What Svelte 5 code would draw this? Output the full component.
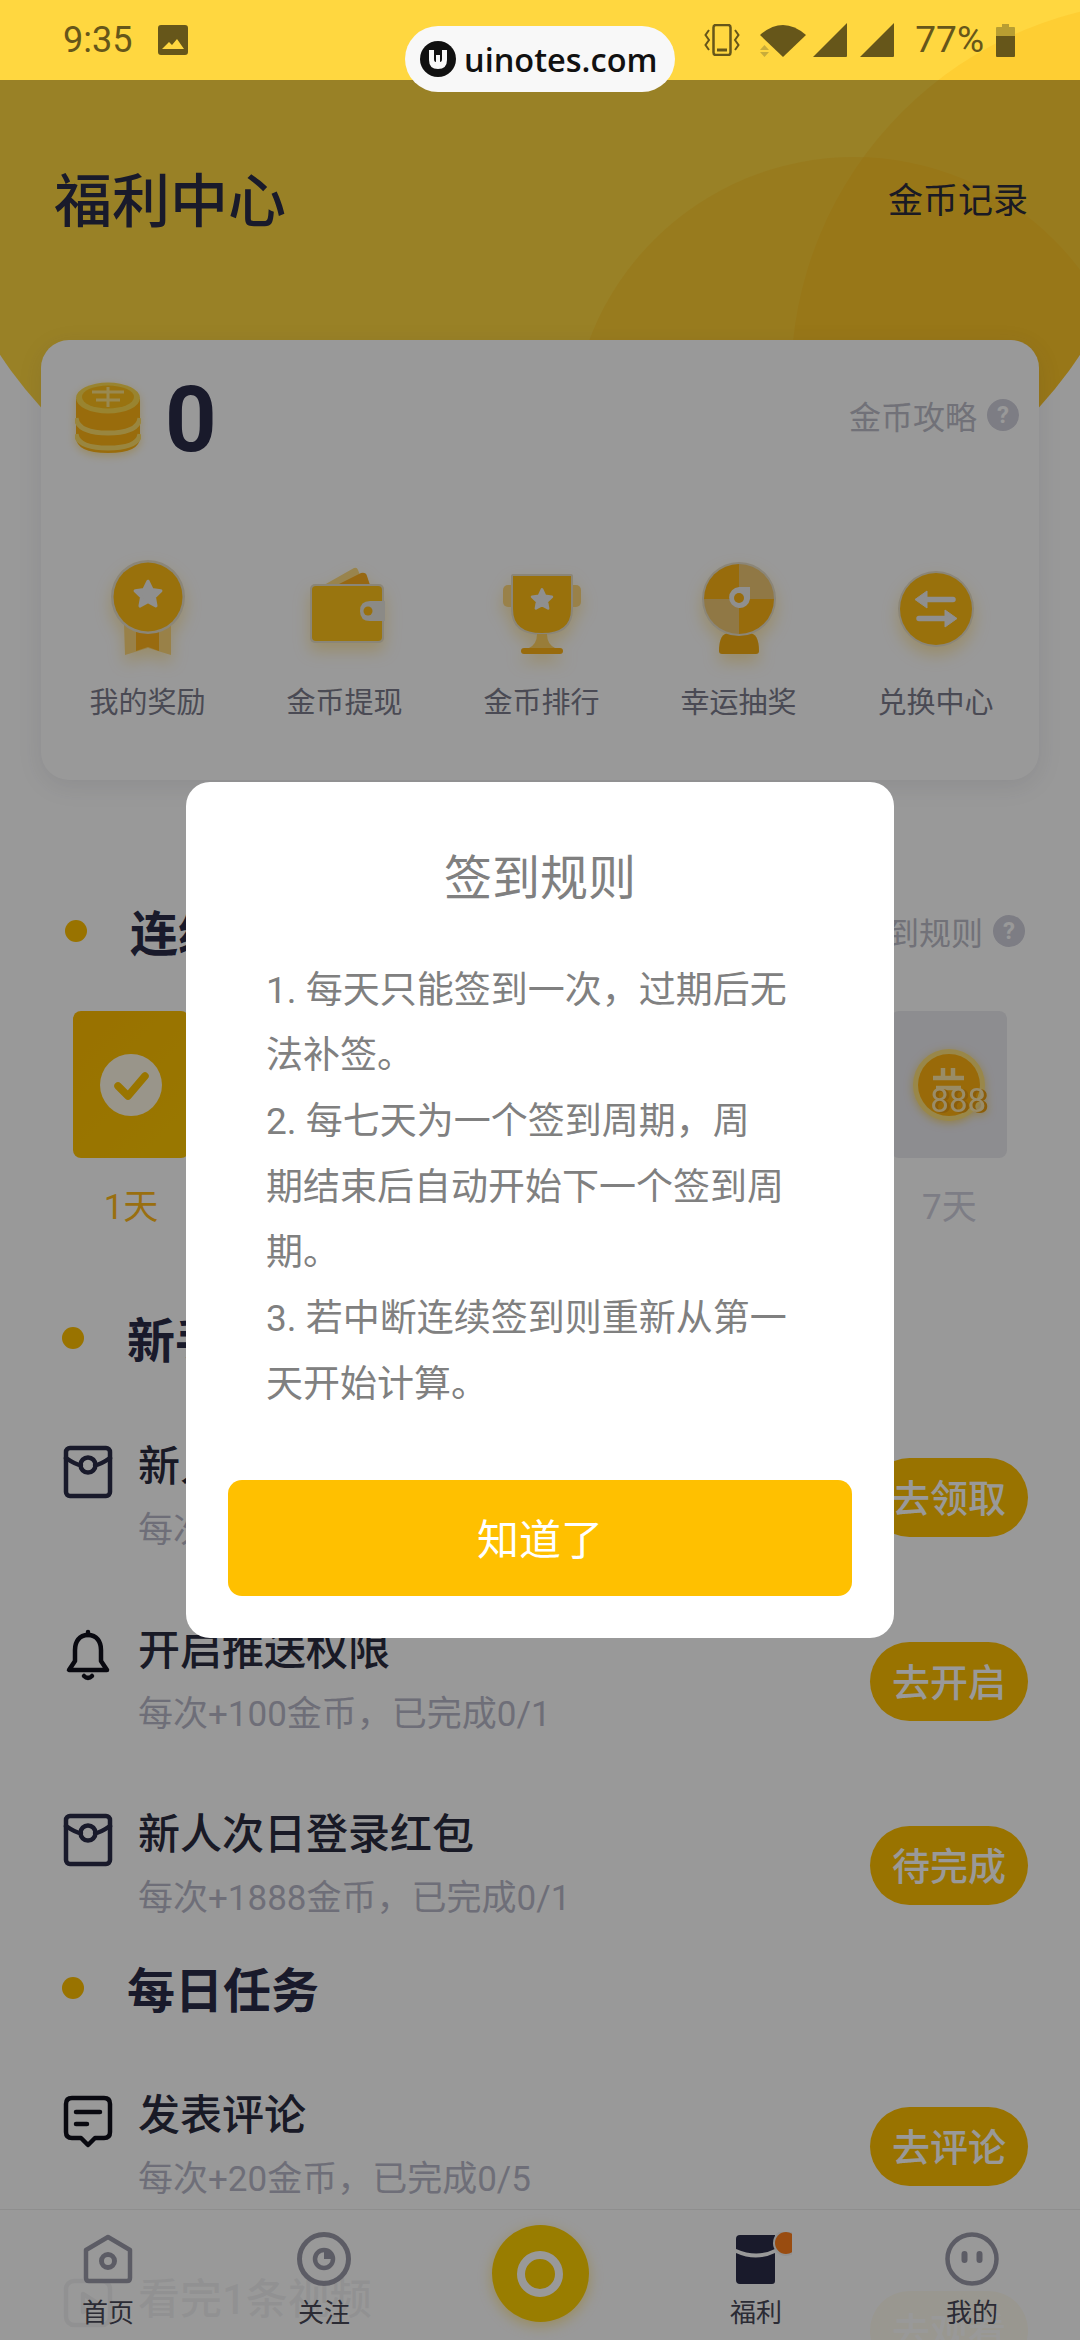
<script>
	const features = [
		{ label: '我的奖励', icon: 'medal' },
		{ label: '金币提现', icon: 'wallet' },
		{ label: '金币排行', icon: 'trophy' },
		{ label: '幸运抽奖', icon: 'wheel' },
		{ label: '兑换中心', icon: 'swap' }
	];

	const days = [
		{ label: '1天', done: true },
		{ label: '2天', value: 100 },
		{ label: '3天', value: 200 },
		{ label: '4天', value: 300 },
		{ label: '5天', value: 400 },
		{ label: '6天', value: 500 },
		{ label: '7天', value: 888 }
	];

	const newbieTasks = [
		{ icon: 'packet', title: '新人专享红包', sub: '每次+888金币，已完成0/1', action: '去领取' },
		{ icon: 'bell', title: '开启推送权限', sub: '每次+100金币，已完成0/1', action: '去开启' },
		{ icon: 'packet', title: '新人次日登录红包', sub: '每次+1888金币，已完成0/1', action: '待完成' }
	];

	const dailyTasks = [
		{ icon: 'comment', title: '发表评论', sub: '每次+20金币，已完成0/5', action: '去评论' },
		{ icon: 'video', title: '看完1条视频', sub: '每次+20金币，已完成0/5', action: '去观看' }
	];

	const star = 'M50 25l4.6 9.6 10.4 1.5-7.6 7.3 1.8 10.4-9.2-5-9.2 5 1.8-10.4-7.6-7.3 10.4-1.5z';
</script>

{#snippet taskIcon(name)}
	<svg class="task-icon" viewBox="0 0 50 54" fill="none" stroke="#2a2c48" stroke-width="4.5" stroke-linecap="round" stroke-linejoin="round">
		{#if name === 'packet'}
			<rect x="3" y="3" width="44" height="48" rx="4" />
			<path d="M3 13q10 7 15 7M47 13q-10 7-15 7" />
			<circle cx="25" cy="20" r="7.5" />
		{:else if name === 'bell'}
			<path d="M25 6c-9 0-13 7-13 15v11l-6 9h38l-6-9V21c0-8-4-15-13-15z" stroke="#10101c" />
			<path d="M25 3v3M21 47q4 4 8 0" stroke="#10101c" />
		{:else if name === 'comment'}
			<path d="M9 4h32q6 0 6 6v28q0 6-6 6h-9l-7 7-7-7H9q-6 0-6-6V10q0-6 6-6z" stroke="#10101c" />
			<path d="M13 18h24M13 30h11" stroke="#10101c" />
		{:else}
			<rect x="3" y="3" width="44" height="44" rx="8" />
			<path d="M20 16l14 9-14 9z" />
		{/if}
	</svg>
{/snippet}

{#snippet coin(value)}
	<div class="day-coin">
		<svg viewBox="0 0 74 74" width="74" height="74">
			<circle cx="37" cy="37" r="36" fill="#ffe27a" />
			<circle cx="37" cy="37" r="31" fill="#ffb10f" />
			<path d="M21 30h31M24 40h25M31 20v10M41 20v10" stroke="#ffe9a8" stroke-width="4.5" fill="none" />
		</svg>
		<span class="coin-value">{value}</span>
	</div>
{/snippet}

{#snippet helpDot()}
	<span class="help">?</span>
{/snippet}

<div class="screen">
	<div class="hero-bg">
		<div class="hero-shape">
			<span class="blob blob-a"></span>
			<span class="blob blob-b"></span>
		</div>
	</div>

	<div class="page">
		<div class="status">
			<span class="time">9:35</span>
			<svg class="st-img" viewBox="0 0 30 30" width="30" height="30">
				<path fill-rule="evenodd" d="M3 0h24q3 0 3 3v24q0 3-3 3H3q-3 0-3-3V3q0-3 3-3zM4 24h22l-7-10-5 6-3-3z" fill="#66561a" />
			</svg>
			<svg class="st-vib" viewBox="0 0 36 32" width="36" height="32" fill="none" stroke="#66561a" stroke-width="2">
				<rect x="9.500" y="1" width="17" height="30" rx="2.500" stroke-width="2.500" />
				<path d="M13 26h10" stroke-width="3" />
				<path d="M5 6L1.500 11 5 16 1.500 21 5 26M31 6l3.500 5-3.500 5 3.500 5-3.500 5" />
			</svg>
			<svg class="st-wifi" viewBox="0 0 46 34" width="46" height="34">
				<path d="M0 12Q23-8 46 12L23 34z" fill="#66561a" />
				<path d="M0 27l4.500-5 4.500 5zM0 29l4.500 5 4.500-5z" fill="#c9ac3a" />
			</svg>
			<svg class="st-sig" viewBox="0 0 34 34" width="34" height="34"><path d="M34 0v33q0 1-1 1H0z" fill="#66561a" /></svg>
			<svg class="st-sig second" viewBox="0 0 34 34" width="34" height="34"><path d="M34 0v33q0 1-1 1H0z" fill="#66561a" /></svg>
			<span class="pct">77%</span>
			<svg class="st-bat" viewBox="0 0 19 33" width="19" height="33">
				<path d="M6 0h7v3h5q1 0 1 1v10H0V4q0-1 1-1h5z" fill="#b89e32" />
				<path d="M0 12h19v20q0 1-1 1H1q-1 0-1-1z" fill="#66561a" />
			</svg>
		</div>

		<header class="topbar">
			<h1>福利中心</h1>
			<span class="record">金币记录</span>
		</header>

		<section class="wallet-card">
			<div class="balance">
				<svg class="stack" viewBox="0 0 66 72" width="66" height="72">
					<path d="M1 17h64v38q0 16-32 16T1 55z" fill="#ffb414" />
					<path d="M1 36q2 15 32 15t32-15M1 52q2 14 32 14t32-14" fill="none" stroke="#ffe06a" stroke-width="5" />
					<ellipse cx="33" cy="16" rx="32" ry="15.500" fill="#ffdc50" />
					<ellipse cx="33" cy="15" rx="26" ry="11.500" fill="#ffc01c" />
					<path d="M17 10h32M21 18h24M33 5v20" stroke="#ffe488" stroke-width="3" fill="none" />
				</svg>
				<span class="amount">0</span>
				<span class="guide">金币攻略{@render helpDot()}</span>
			</div>
			<div class="features">
				{#each features as f}
					<div class="feature">
						<svg viewBox="0 0 100 100" width="100" height="100">
							{#if f.icon === 'medal'}
								<path d="M26 64h47v31l-23-7-23 7z" fill="#ffd878" />
								<path d="M38 64h23v27l-11-4-12 4z" fill="#ffb31c" />
								<circle cx="50" cy="37" r="37" fill="#e8dfc8" />
								<circle cx="50" cy="37" r="34.500" fill="#ffbd14" />
								<path d={star} transform="translate(50 35) scale(0.85) translate(-50 -41)" fill="#eee" stroke="#eee" stroke-width="4" stroke-linejoin="round" />
							{:else if f.icon === 'wallet'}
								<path d="M29 25L59 8q3-1 4 2l6 15z" fill="#ffdc80" />
								<path d="M42 25l24-12q5-1 6 3l3 9z" fill="#fcae1f" />
								<rect x="15" y="24" width="74" height="59" rx="5" fill="#e8dfc8" />
								<rect x="17" y="26" width="70" height="55" rx="4" fill="#ffc31a" />
								<path d="M90 41H75q-10 0-10 10t10 10h15z" fill="#e8e6e0" />
								<circle cx="73" cy="51" r="4.500" fill="#ffbb14" />
							{:else if f.icon === 'trophy'}
								<rect x="11" y="25" width="14" height="22" rx="5" fill="#ffd87a" />
								<rect x="75" y="25" width="14" height="22" rx="5" fill="#ffd87a" />
								<path d="M21 15h58q1 0 1 1v33q0 25-30 25T20 49V16q0-1 1-1z" fill="#ffbd14" stroke="#e8dfc8" stroke-width="2" />
								<path d="M45 74h10q0 10 8 14H37q8-4 8-14z" fill="#ffd060" />
								<rect x="29" y="88" width="42" height="6" rx="3" fill="#fdb217" />
								<path d={star} transform="translate(50 40) scale(0.66) translate(-50 -41)" fill="#eee" stroke="#eee" stroke-width="4" stroke-linejoin="round" />
							{:else if f.icon === 'wheel'}
								<path d="M30 91q0-18 10-18h20q10 0 10 18 0 3-3 3H33q-3 0-3-3z" fill="#f5ae12" />
								<circle cx="50" cy="39" r="37" fill="#e8dfc8" />
								<path d="M50 39V4a35 35 0 0 0-35 35z" fill="#fdb414" />
								<path d="M50 39V4a35 35 0 0 1 35 35z" fill="#f0c873" />
								<path d="M50 39H15a35 35 0 0 0 35 35z" fill="#f0c873" />
								<path d="M50 39H85a35 35 0 0 1-35 35z" fill="#fdb414" />
								<path d="M50 27h11v12a10.500 10.500 0 1 1-11-12z" fill="#eee" />
								<circle cx="50" cy="38" r="5" fill="#fdb414" />
							{:else}
								<circle cx="50" cy="49" r="38" fill="#e8dfc8" />
								<circle cx="50" cy="49" r="36" fill="#ffbd14" />
								<path d="M41 31L29 39.500 41 48z" fill="#eee" stroke="#eee" stroke-linejoin="round" />
								<path d="M59 50L71 58.500 59 67z" fill="#eee" stroke="#eee" stroke-linejoin="round" />
								<path d="M40 39.500H67M33 58.500H60" fill="none" stroke="#eee" stroke-width="5.500" stroke-linecap="round" />
							{/if}
						</svg>
						<span>{f.label}</span>
					</div>
				{/each}
			</div>
		</section>

		<div class="section-head first">
			<i class="dot"></i>
			<h2>连续签到</h2>
			<span class="guide">签到规则{@render helpDot()}</span>
		</div>
		<div class="days">
			{#each days as d}
				<div class="day" class:done={d.done}>
					<div class="tile">
						{#if d.done}
							<svg viewBox="0 0 62 62" width="62" height="62">
								<circle cx="31" cy="31" r="31" fill="#fff" opacity="0.9" />
								<path d="M18 32l10 10 17-20" fill="none" stroke="#ffc400" stroke-width="7.500" stroke-linecap="round" stroke-linejoin="round" />
							</svg>
						{:else}
							{@render coin(d.value)}
						{/if}
					</div>
					<span>{d.label}</span>
				</div>
			{/each}
		</div>

		<div class="section-head second">
			<i class="dot"></i>
			<h2>新手任务</h2>
		</div>
		{#each newbieTasks as t}
			<div class="task">
				{@render taskIcon(t.icon)}
				<div class="task-text">
					<b>{t.title}</b>
					<small>{t.sub}</small>
				</div>
				<button type="button">{t.action}</button>
			</div>
		{/each}

		<div class="section-head daily">
			<i class="dot"></i>
			<h2>每日任务</h2>
		</div>
		{#each dailyTasks as t}
			<div class="task">
				{@render taskIcon(t.icon)}
				<div class="task-text">
					<b>{t.title}</b>
					<small>{t.sub}</small>
				</div>
				<button type="button">{t.action}</button>
			</div>
		{/each}
	</div>

	<nav class="tabbar">
		<div class="tab">
			<svg viewBox="0 0 50 50" width="50" height="50" fill="none" stroke="#9a9aa8" stroke-width="4.500" stroke-linejoin="round">
				<path d="M25 3L47 16v28q0 3-3 3H6q-3 0-3-3V16z" />
				<circle cx="25" cy="27" r="6.500" stroke-width="5" />
			</svg>
			<span>首页</span>
		</div>
		<div class="tab">
			<svg viewBox="0 0 54 54" width="54" height="54" fill="none" stroke="#9a9aa8" stroke-width="5">
				<circle cx="27" cy="27" r="24.500" />
				<circle cx="27" cy="27" r="9" stroke-width="4.500" />
				<path d="M27 18a9 9 0 0 1 9 9h-9z" fill="#9a9aa8" stroke="none" />
			</svg>
			<span>关注</span>
		</div>
		<div class="tab center">
			<span class="center-btn"><i></i></span>
		</div>
		<div class="tab">
			<svg viewBox="0 0 72 54" width="72" height="54">
				<path d="M20 3h35v14q-18 9-39 0V7q0-4 4-4z" fill="#2a2c48" />
				<path d="M16 21q20 9 39 0v28q0 3-3 3H20q-4 0-4-4z" fill="#2a2c48" />
				<circle cx="66" cy="11" r="13" fill="#f2f2f2" />
				<circle cx="66" cy="11" r="11" fill="#ff7f1c" />
			</svg>
			<span>福利</span>
		</div>
		<div class="tab">
			<svg viewBox="0 0 54 54" width="54" height="54" fill="none" stroke="#9a9aa8" stroke-width="4.500">
				<circle cx="27" cy="27" r="24.500" />
				<path d="M19.500 22v6M34.500 22v6" stroke-width="6" stroke-linecap="round" />
			</svg>
			<span>我的</span>
		</div>
	</nav>

	<div class="overlay">
		<div class="modal">
			<h3>签到规则</h3>
			<p>
				1. 每天只能签到一次，过期后无<br />法补签。<br />
				2. 每七天为一个签到周期，周<br />期结束后自动开始下一个签到周<br />期。<br />
				3. 若中断连续签到则重新从第一<br />天开始计算。
			</p>
			<button type="button">知道了</button>
		</div>
	</div>

	<div class="watermark">
		<svg viewBox="0 0 36 36" width="36" height="36">
			<circle cx="18" cy="18" r="18" fill="#111" />
			<path d="M9 9h5v9q0 3 2 3V14h4v7q2 0 2-3V9h5v10q0 9-9 9t-9-9z" fill="#f8f8f8" />
		</svg>
		<span>uinotes.com</span>
	</div>
</div>

<style>
	:global(body) {
		margin: 0;
		background: #fff;
	}

	.screen {
		position: relative;
		width: 1080px;
		height: 2340px;
		overflow: hidden;
		background: #fff;
		font-family: Roboto, "Noto Sans CJK SC", sans-serif;
		color: #2c2c3c;
	}

	.hero-bg {
		position: absolute;
		top: 0;
		left: 0;
		width: 1080px;
		height: 610px;
		overflow: hidden;
	}

	.hero-shape {
		position: absolute;
		left: -60px;
		top: 0;
		width: 1200px;
		height: 603px;
		background: #ffd740;
		border-radius: 0 0 600px 600px / 0 0 440px 440px;
		overflow: hidden;
	}

	.blob {
		position: absolute;
		border-radius: 50%;
		background: rgba(250, 170, 0, 0.2);
	}

	.blob-a {
		left: 851px;
		top: 1px;
		width: 758px;
		height: 758px;
	}

	.blob-b {
		left: 631px;
		top: 157px;
		width: 566px;
		height: 566px;
	}

	.page {
		position: relative;
	}

	.status {
		display: flex;
		align-items: center;
		height: 80px;
		padding: 0 65px 0 63px;
		box-sizing: border-box;
		color: #66561a;
		font-size: 36px;
	}

	.time {
		width: 98px;
		line-height: 88px;
	}

	.status svg {
		flex: none;
	}

	.st-img {
		margin-right: 516px;
	}

	.st-wifi {
		margin-left: 20px;
	}

	.st-sig {
		margin-left: 7px;
	}

	.st-sig.second {
		margin-left: 13px;
	}

	.pct {
		margin-left: 21px;
		margin-right: 12px;
		font-size: 37px;
		line-height: 84px;
	}

	.topbar {
		display: flex;
		align-items: center;
		justify-content: space-between;
		height: 240px;
		padding: 0 52px 0 54px;
		box-sizing: border-box;
	}

	h1 {
		margin: -7px 0 0;
		font-size: 58px;
		font-weight: 500;
		color: #2a2c48;
	}

	.record {
		margin-top: -5px;
		font-size: 35px;
		color: #2c2c3c;
	}

	.wallet-card {
		height: 440px;
		margin: 20px 41px 0;
		padding: 34px 20px 0 34px;
		box-sizing: border-box;
		background: #fff;
		border-radius: 28px;
		box-shadow: 0 6px 24px rgba(60, 60, 90, 0.1);
	}

	.balance {
		display: flex;
		align-items: center;
		height: 88px;
	}

	.stack {
		filter: drop-shadow(0 3px 4px rgba(255, 190, 0, 0.35));
	}

	.amount {
		margin: 5px 0 0 24px;
		font-size: 90px;
		font-weight: 700;
		line-height: 88px;
		color: #2a2c48;
	}

	.guide {
		display: flex;
		align-items: center;
		gap: 10px;
		margin-left: auto;
		font-size: 32px;
		color: #bcbcc8;
	}

	.balance .guide {
		margin-top: -6px;
	}

	.help {
		display: flex;
		align-items: center;
		justify-content: center;
		width: 32px;
		height: 32px;
		border-radius: 50%;
		background: #d0d0dc;
		color: #fff;
		font-size: 24px;
		font-weight: 700;
	}

	.features {
		display: grid;
		grid-template-columns: repeat(5, 197px);
		margin: 98px 0 0 -26px;
	}

	.feature {
		display: flex;
		flex-direction: column;
		align-items: center;
		font-size: 29px;
		color: #7c7c8c;
	}

	.feature svg {
		filter: drop-shadow(0 8px 8px rgba(255, 190, 0, 0.3));
	}

	.feature span {
		margin-top: 23px;
		line-height: 40px;
	}

	.section-head {
		display: flex;
		align-items: center;
		height: 62px;
		padding: 0 55px 0 62px;
	}

	.section-head.first {
		margin-top: 120px;
		margin-bottom: 49px;
		padding-left: 65px;
	}

	.section-head.second {
		margin-top: 79px;
		margin-bottom: 36px;
	}

	.section-head.daily {
		margin-bottom: 35px;
	}

	.dot {
		width: 22px;
		height: 22px;
		border-radius: 50%;
		background: #ffc000;
	}

	h2 {
		margin: -3px 0 0 43px;
		font-size: 48px;
		font-weight: 700;
		color: #2a2c48;
	}

	.days {
		display: flex;
		gap: 20.400px;
		padding-left: 73px;
	}

	.day {
		display: flex;
		flex-direction: column;
		align-items: center;
		width: 116px;
		font-size: 35px;
		color: #d0d0de;
	}

	.day > span {
		margin-top: 30px;
		line-height: 40px;
	}

	.day.done > span {
		color: #ffb91a;
	}

	.tile {
		display: flex;
		align-items: center;
		justify-content: center;
		width: 116px;
		height: 147px;
		border-radius: 8px;
		background: #ebebf0;
	}

	.day.done .tile {
		background: linear-gradient(135deg, #ffbd00, #ffc800);
	}

	.day-coin {
		position: relative;
		width: 74px;
		height: 74px;
		filter: drop-shadow(0 2px 4px rgba(255, 190, 0, 0.5));
	}

	.day-coin svg {
		display: block;
	}

	.coin-value {
		position: absolute;
		left: 18px;
		top: 35px;
		font-size: 33px;
		line-height: 36px;
		color: #ffe9b0;
		text-shadow: 3px 1px 0 #e89c10;
	}

	.task {
		display: flex;
		align-items: center;
		height: 184px;
		padding: 0 52px 0 63px;
		box-sizing: border-box;
	}

	.task-icon {
		flex: none;
		width: 50px;
		height: 54px;
		margin: 0 25px 50px 0;
	}

	.task-text {
		display: flex;
		flex-direction: column;
		flex: 1;
		padding-top: 4px;
	}

	.task-text b {
		font-size: 42px;
		font-weight: 500;
		line-height: 50px;
		color: #2a2c40;
	}

	.task-text small {
		margin-top: 14px;
		font-size: 35px;
		line-height: 50px;
		color: #b8b8c8;
	}

	.task button {
		flex: none;
		width: 158px;
		height: 79px;
		border: none;
		padding: 0 0 4px;
		border-radius: 40px;
		background: #ffc000;
		color: #fff;
		font-family: inherit;
		font-size: 38px;
		font-weight: 500;
	}

	.tabbar {
		position: absolute;
		left: 0;
		right: 0;
		bottom: 0;
		display: grid;
		grid-template-columns: repeat(5, 1fr);
		height: 131px;
		box-sizing: border-box;
		border-top: 1px solid rgba(0, 0, 0, 0.07);
		background: rgba(255, 255, 255, 0.94);
	}

	.tab {
		position: relative;
		display: flex;
		flex-direction: column;
		align-items: center;
		padding-top: 22px;
		font-size: 26px;
		color: #484858;
	}

	.tab svg {
		height: 54px;
		display: block;
	}

	.tab span {
		margin-top: 12px;
		line-height: 30px;
	}

	.tab span.center-btn {
		display: flex;
		align-items: center;
		justify-content: center;
		width: 97px;
		height: 97px;
		margin: -7px 0 0;
		border-radius: 50%;
		background: #ffd000;
		box-shadow: 0 4px 14px rgba(255, 200, 0, 0.4);
	}

	.center-btn i {
		width: 46px;
		height: 46px;
		box-sizing: border-box;
		border: 8px solid #fff;
		border-radius: 50%;
	}

	.overlay {
		position: absolute;
		left: 0;
		right: 0;
		top: 80px;
		bottom: 0;
		display: flex;
		align-items: center;
		justify-content: center;
		background: rgba(0, 0, 0, 0.4);
	}

	.modal {
		width: 708px;
		box-sizing: border-box;
		padding: 65px 42px 42px;
		background: #fff;
		border-radius: 24px;
	}

	h3 {
		margin: 0;
		font-size: 48px;
		font-weight: 400;
		line-height: 64px;
		text-align: center;
		color: #808080;
	}

	.modal p {
		margin: 47px 0 63px;
		padding-left: 38px;
		font-size: 37px;
		line-height: 65.700px;
		color: #808080;
		white-space: nowrap;
	}

	.modal button {
		display: block;
		width: 100%;
		height: 116px;
		border: none;
		padding: 0 0 4px;
		border-radius: 14px;
		background: #ffc000;
		color: #fff;
		font-family: inherit;
		font-size: 42px;
	}

	.watermark {
		position: absolute;
		left: 405px;
		top: 26px;
		display: flex;
		align-items: center;
		gap: 8px;
		width: 270px;
		height: 66px;
		padding-left: 15px;
		box-sizing: border-box;
		border-radius: 33px;
		background: #f8f8f8;
		font-family: "Open Sans", sans-serif;
		font-size: 32.500px;
		font-weight: 600;
		color: #111;
	}
</style>
